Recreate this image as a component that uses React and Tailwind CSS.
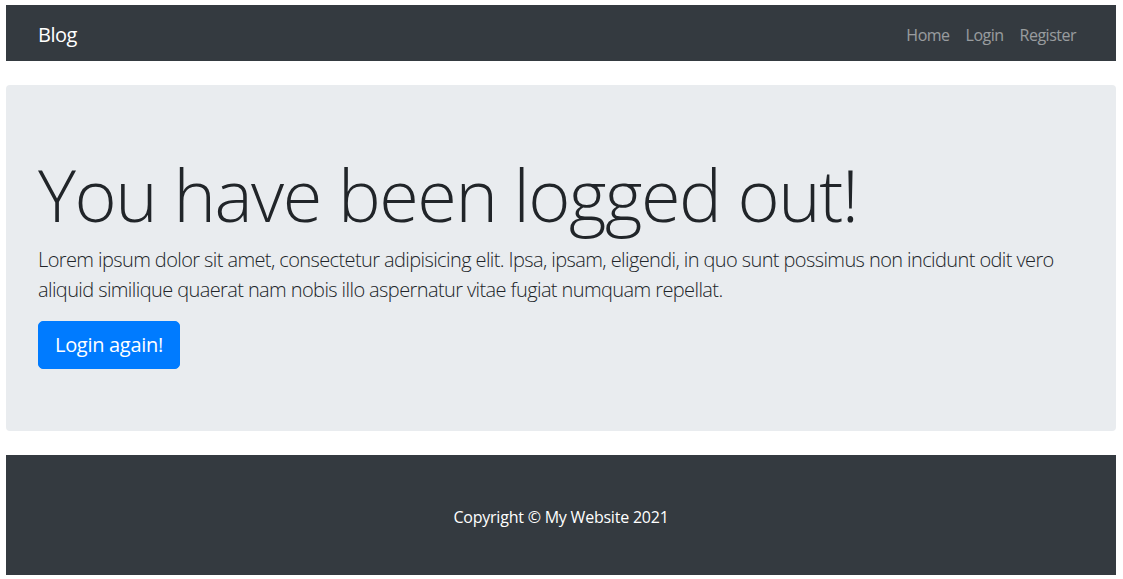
export default function App() {
  const links = ['Home', 'Login', 'Register'];

  return (
    <div className="min-h-[579px] bg-white pl-[6px] pr-[7px] pt-[5px] font-['Open_Sans',sans-serif] text-[#212529]">
      {/* Navbar */}
      <nav className="flex h-[56px] items-center justify-between bg-[#343a40] px-[32px]">
        <a href="#" className="mt-[3px] text-[20px] leading-[30px] tracking-[-0.5px] text-white">Blog</a>
        <ul className="mt-[3px] flex">
          {links.map(l => (
            <li key={l}>
              <a href="#" className="block px-[8px] py-[8px] text-[16px] leading-[24px] tracking-[-0.5px] text-white/50">{l}</a>
            </li>
          ))}
        </ul>
      </nav>

      {/* Jumbotron */}
      <div className="mt-[24px] rounded-[4px] bg-[#e9ecef] px-[32px] pt-[66px] pb-[62px]">
        <h1 className="mb-[8px] text-[72px] font-light leading-[1.2] tracking-[-1.5px]">You have been logged out!</h1>
        <p className="mb-[16px] text-[20px] font-light leading-[1.5] tracking-[-0.6px]">
          Lorem ipsum dolor sit amet, consectetur adipisicing elit. Ipsa, ipsam, eligendi, in quo sunt possimus non incidunt odit vero aliquid similique quaerat nam nobis illo aspernatur vitae fugiat numquam repellat.
        </p>
        <a href="#" className="inline-block rounded-[5px] border border-[#007bff] bg-[#007bff] px-[16px] py-[8px] text-[20px] leading-[30px] tracking-[-0.3px] text-white">Login again!</a>
      </div>

      {/* Footer */}
      <footer className="mt-[24px] bg-[#343a40] pt-[50px] pb-[46px] text-center">
        <p className="text-[16px] leading-[24px] tracking-[-0.22px] text-white">Copyright © My Website 2021</p>
      </footer>
    </div>
  );
}
